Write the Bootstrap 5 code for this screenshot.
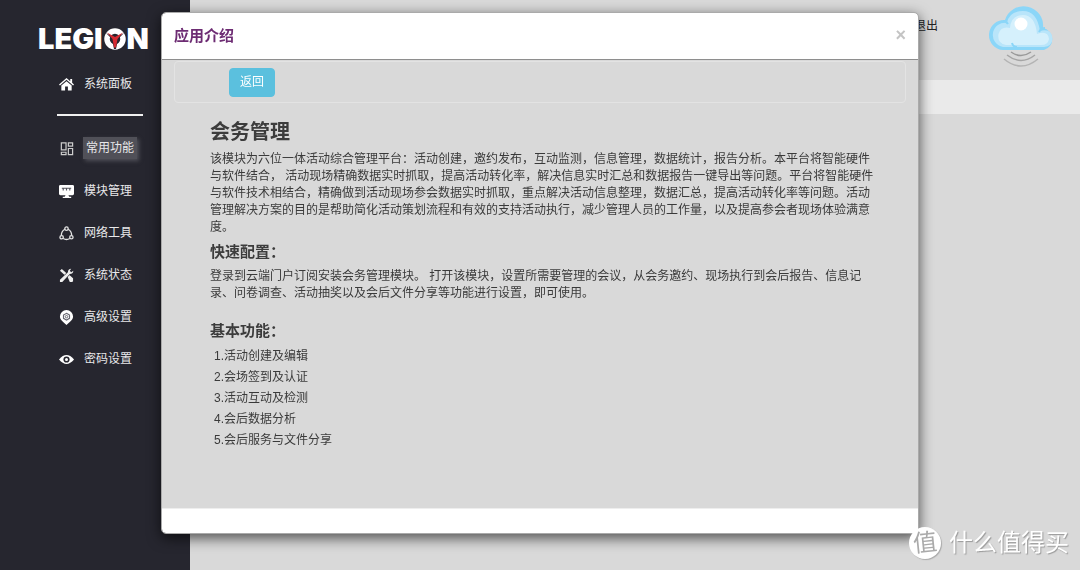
<!DOCTYPE html>
<html lang="zh-CN">
<head>
<meta charset="utf-8">
<meta name="viewport" content="width=device-width, initial-scale=1">
<title>应用介绍</title>
<link href="https://cdn.jsdelivr.net/npm/bootstrap@5.3.0/dist/css/bootstrap.min.css" rel="stylesheet">
<style>
  body { font-family: "Liberation Sans", "Noto Sans CJK SC", sans-serif; font-size: 12px; line-height: 17px; color: #3a3a3a; background: #d9d9d9; }
  .side { width: 190px; background: #26262f; padding-top: 24px; }
  .brand { font: 900 29px/30px Inter, sans-serif; color: #fff; margin-left: 38px; height: 30px; }
  .brand svg { width: 22px; height: 22px; margin: 0 1px; }
  .side .nav { padding-left: 59px; }
  .side .nav-link { height: 42px; padding: 0; gap: 9px; color: #e8e8ea; }
  .side .nav-link svg { width: 15px; height: 15px; flex: none; }
  .side .nav-link.home { height: 60px; }
  .side .nav-link.active { height: 44px; }
  .active .label { background: #505058; padding: 3px; box-shadow: 2px 2px 4px #505058; height: 22px; line-height: 16px; }
  .label { padding-left: 1px; }
  .rule { width: 86px; height: 2px; margin: 0 0 10px 57px; background: #f0f0f0; }
  .topbar { height: 80px; padding-right: 24px; }
  .topbar a { color: #222; margin: 18px 48px 0 0; }
  .topbar svg { width: 70px; height: 64px; margin-top: 6px; }
  .strip { height: 34px; background: #eaeaea; }
  .modal-dialog { max-width: 758px; margin: 12px auto; }
  .modal-content { border: 1px solid #aaa; border-radius: 5px; box-shadow: 0 4px 14px rgba(0,0,0,.65); color: #3a3a3a; overflow: hidden; }
  .modal-header { height: 47px; padding: 0 12px; border-color: #8e8e8e; border-radius: 0; }
  .modal-title { font-size: 15px; line-height: 20px; font-weight: 700; color: #6d2c73; }
  .shut { font: bold 18px/18px "Liberation Sans", sans-serif; color: #c4c4c4; padding: 0; margin-top: -3px; }
  .modal-body { background: #d9d9d9; padding: 1px 12px 57px; }
  .tools { height: 42px; padding: 0 54px; border: 1px solid #e3e3e3; border-radius: 4px; }
  .back { font-size: 12px; line-height: 17px; width: 46px; height: 29px; padding: 0; color: #fff; background: #5bc0de; border-color: #5bc0de; border-radius: 4px; }
  .article { padding: 17px 0 0 36px; white-space: nowrap; }
  .article h2 { font-size: 20px; line-height: 24px; margin-bottom: 7px; font-weight: 700; color: #3c3c3c; }
  .article h3 { font-size: 15px; line-height: 17px; margin: 7px 0 8px; font-weight: 700; color: #3c3c3c; }
  .article p + h3.later { margin-top: 20px; margin-bottom: 7px; }
  .article ol { line-height: 21px; margin: 0; }
  .modal-footer { height: 25px; padding: 0; border-color: #eee; }
  .mark-line { right: 11px; bottom: 11px; z-index: 2000; gap: 8px; color: #fff; font-size: 24px; line-height: 32px; text-shadow: 1px 1px 1px #999; }
  .seal { width: 32px; height: 32px; background: #fff; color: #aaa; box-shadow: 1px 1px 1px #aaa; text-shadow: none; }
  .seal span { transform: rotate(-6deg); font-weight: 400; }
</style>
</head>
<body>
<div class="d-flex min-vh-100">
  <aside class="side flex-shrink-0">
    <div class="brand d-flex align-items-center"><span>LEGI</span><svg viewBox="0 0 22 22" aria-hidden="true"><circle cx="11" cy="11" r="8" fill="none" stroke="#fff" stroke-width="5.500"/><path d="M2 5L11 10 20 5 14 11 12 21H10L8 11Z" fill="#26262f"/><path d="M3 4.500L11 9 19 4.500 13.500 11 12 19.500H10L8.500 11Z" fill="#d62b32"/></svg><span>N</span></div>
    <nav class="nav flex-column flex-nowrap">
      <a class="nav-link home d-flex align-items-center" href="#"><svg viewBox="0 0 16 16" fill="#fff"><path d="M8 1L0 8l1 1 7-6 7 6 1-1-2-2V2h-2v2.500zM8 4.500L2.500 9v5.500h4V10h3v4.500h4V9z"/></svg><span class="label">系统面板</span></a>
    </nav>
    <div class="rule"></div>
    <nav class="nav flex-column flex-nowrap">
      <a class="nav-link active d-flex align-items-center" href="#"><svg viewBox="0 0 16 16" fill="none" stroke="#ccc" stroke-width="1.300"><path d="M2.500 2h5v7.500h-5zM2.500 12h5v2.500h-5zM10 2h4.500v3.500H10zM10 8h4.500v6.500H10z"/></svg><span class="label">常用功能</span></a>
      <a class="nav-link d-flex align-items-center" href="#"><svg viewBox="0 0 16 16" fill="#fff"><path d="M1.500 1h13Q16 1 16 2.500v8Q16 12 14.500 12H10l1 1.500h2V15H4v-1.500h2L7 12H1.500Q0 12 0 10.500v-8Q0 1 1.500 1z"/><path d="M3 4.500h10M4.500 4v3M8 4v3M11.500 4v3" stroke="#55555d" stroke-width="1.200"/></svg><span class="label">模块管理</span></a>
      <a class="nav-link d-flex align-items-center" href="#"><svg viewBox="0 0 16 16" fill="none" stroke="#e4e4e4" stroke-width="1.400"><circle cx="8" cy="2.800" r="1.800"/><circle cx="2.800" cy="12" r="1.800"/><circle cx="13.200" cy="12" r="1.800"/><path d="M6.200 3.500Q2.500 5.500 2.500 10M9.800 3.500Q13.500 5.500 13.500 10M4.500 13.300Q8 15.500 11.500 13.300"/></svg><span class="label">网络工具</span></a>
      <a class="nav-link d-flex align-items-center" href="#"><svg viewBox="0 0 16 16" fill="#eee"><path d="M1 3L3 1l5 4.500L6 7.500zM9 9l1.800-1.800L15 11v3l-1 1h-2.500z"/><path d="M2.500 13.500L12 4" stroke="#26262f" stroke-width="4"/><path d="M1 12.500L9.500 4.500Q9.500 1 13 .8L11.500 3 13 4.500 15.300 3Q15 6.500 11.500 6.500L3.500 15H1z"/></svg><span class="label">系统状态</span></a>
      <a class="nav-link d-flex align-items-center" href="#"><svg viewBox="0 0 16 16"><path d="M8 0a7 7 0 0 1 7 7c0 4-4 6-7 9-3-3-7-5-7-9a7 7 0 0 1 7-7z" fill="#fff"/><path d="M8 3.500l3.200 1.800v3.600L8 10.700 4.800 8.900V5.300z" fill="none" stroke="#666670" stroke-width="1.200"/><circle cx="8" cy="7.100" r="1.300" fill="none" stroke="#666670"/></svg><span class="label">高级设置</span></a>
      <a class="nav-link d-flex align-items-center" href="#"><svg viewBox="0 0 16 16"><path d="M0 8Q8-1.500 16 8 8 17.500 0 8z" fill="#fff"/><circle cx="8" cy="8" r="3.300" fill="#26262f"/><circle cx="8" cy="8" r="1.600" fill="#fff"/></svg><span class="label">密码设置</span></a>
    </nav>
  </aside>
  <main class="flex-grow-1">
    <header class="topbar d-flex justify-content-end align-items-start">
      <a class="text-decoration-none" href="#">退出</a>
      <svg viewBox="0 0 70 64" aria-hidden="true">
        <path d="M17 44A15 15 0 0 1 19 14 19.500 19.500 0 0 1 57 22 11.300 11.300 0 0 1 58 44z" fill="#8bd6f8"/>
        <path d="M17 41A12 12 0 0 1 21 17Q23 5 37 5 51 5 54 25 66 22 66.500 33 66 40 58 41z" fill="#b9e5fa"/>
        <path d="M20 39Q11 37 12.500 28 15 20 24 22 25 9 37 9 49 9 51 28 62 24 63 33 62 39 55 39z" fill="#d5f0fc"/>
        <path d="M17 15Q20 15 22 18M53 26Q55 22 59 22M26 37Q27 41 31 41" fill="none" stroke="#8bd6f8" stroke-width="2"/>
        <circle cx="35" cy="18" r="6.500" fill="#fff"/>
        <g fill="none" stroke-width="1.500"><path d="M25 46Q35 53 45 46" stroke="#999"/><path d="M21 49Q35 60 49 49" stroke="#a5a5a5"/><path d="M18 53Q35 67 52 53" stroke="#b4b4b4"/></g>
      </svg>
    </header>
    <div class="strip"></div>
  </main>
</div>

<div class="modal show d-block" tabindex="-1" role="dialog" aria-labelledby="introTitle">
  <div class="modal-dialog">
    <div class="modal-content">
      <div class="modal-header d-flex justify-content-between">
        <h1 class="modal-title" id="introTitle">应用介绍</h1>
        <button type="button" class="shut btn border-0" aria-label="关闭">×</button>
      </div>
      <div class="modal-body">
        <div class="tools d-flex align-items-center"><button type="button" class="btn back">返回</button></div>
        <article class="article">
          <h2>会务管理</h2>
          <p class="mb-0">该模块为六位一体活动综合管理平台：活动创建，邀约发布，互动监测，信息管理，数据统计，报告分析。本平台将智能硬件<br>与软件结合， 活动现场精确数据实时抓取，提高活动转化率，解决信息实时汇总和数据报告一键导出等问题。平台将智能硬件<br>与软件技术相结合，精确做到活动现场参会数据实时抓取，重点解决活动信息整理，数据汇总，提高活动转化率等问题。活动<br>管理解决方案的目的是帮助简化活动策划流程和有效的支持活动执行，减少管理人员的工作量，以及提高参会者现场体验满意<br>度。</p>
          <h3>快速配置：</h3>
          <p class="mb-0">登录到云端门户订阅安装会务管理模块。 打开该模块，设置所需要管理的会议，从会务邀约、现场执行到会后报告、信息记<br>录、问卷调查、活动抽奖以及会后文件分享等功能进行设置，即可使用。</p>
          <h3 class="later">基本功能：</h3>
          <ol class="list-unstyled ps-1">
            <li>1.活动创建及编辑</li>
            <li>2.会场签到及认证</li>
            <li>3.活动互动及检测</li>
            <li>4.会后数据分析</li>
            <li>5.会后服务与文件分享</li>
          </ol>
        </article>
      </div>
      <div class="modal-footer"></div>
    </div>
  </div>
</div>

<div class="mark-line position-fixed d-flex align-items-center">
  <span class="seal rounded-circle d-flex align-items-center justify-content-center"><span>值</span></span>
  <span>什么值得买</span>
</div>
<script src="https://cdn.jsdelivr.net/npm/bootstrap@5.3.0/dist/js/bootstrap.bundle.min.js"></script>
</body>
</html>
